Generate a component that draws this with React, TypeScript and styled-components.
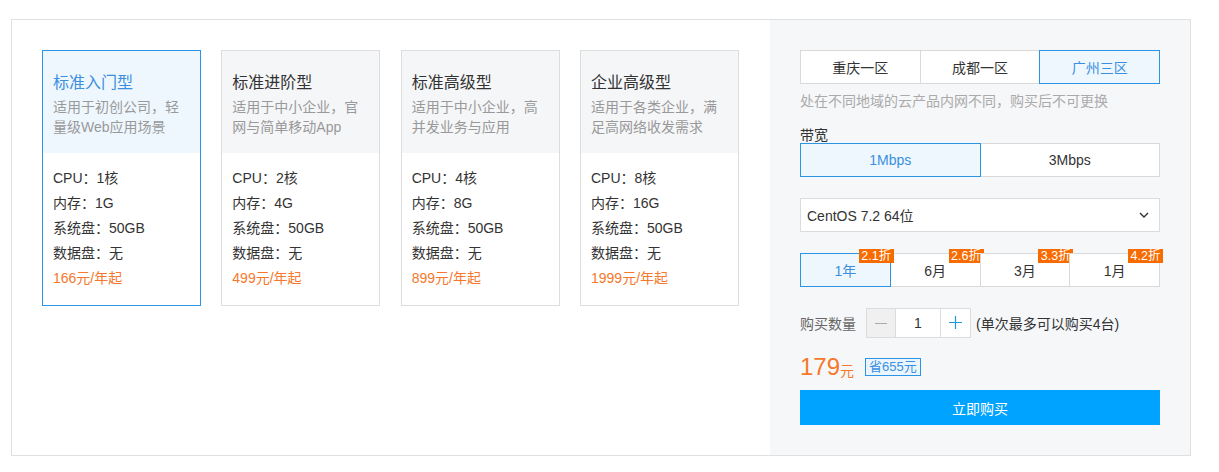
import React from "react";
import styled, { createGlobalStyle } from "styled-components";

const GlobalStyle = createGlobalStyle`
  html, body { margin: 0; padding: 0; background: #fff; }
  body {
    font-family: "Liberation Sans", Arial, "Noto Sans CJK SC", sans-serif;
    font-size: 14px;
    color: #333;
  }
  * { box-sizing: border-box; }
`;

const BLUE = "#2b95e3";
const BLUE_TEXT = "#3a8fe0";
const LIGHT_BLUE = "#eef7fe";
const ORANGE = "#f5782c";

const Page = styled.div`
  padding: 19px 0 0 11px;
`;

const Frame = styled.div`
  width: 1180px;
  border: 1px solid #e0e0e0;
  display: flex;
`;

const Plans = styled.div`
  flex: 1;
  padding: 30px 30px;
`;

const CardGrid = styled.div`
  display: grid;
  grid-template-columns: repeat(4, 159px);
  column-gap: 20.33px;
  align-items: start;
`;

const Card = styled.div<{ $active?: boolean }>`
  border: 1px solid ${(p) => (p.$active ? BLUE : "#dddddd")};
  background: #fff;
`;

const CardHead = styled.div<{ $active?: boolean }>`
  background: ${(p) => (p.$active ? "#eff7fe" : "#f5f6f8")};
  padding: 20px 10px 16px;
`;

const CardTitle = styled.div<{ $active?: boolean }>`
  font-size: 16px;
  line-height: 24px;
  color: ${(p) => (p.$active ? BLUE_TEXT : "#333")};
`;

const CardDesc = styled.div`
  margin-top: 2px;
  font-size: 14px;
  line-height: 20px;
  color: #999;
`;

const CardBody = styled.div`
  padding: 13px 10px 14px;
`;

const Spec = styled.div`
  font-size: 14px;
  line-height: 25px;
  color: #333;
`;

const Price = styled.div`
  font-size: 14px;
  line-height: 25px;
  color: ${ORANGE};
`;

const Side = styled.div`
  width: 420px;
  background: #f6f7f9;
  padding: 30px 30px;
  display: flex;
  flex-direction: column;
`;

const Segmented = styled.div`
  display: flex;
  width: 360px;
  height: 34px;
`;

const SegButton = styled.div<{ $active?: boolean }>`
  position: relative;
  flex: 1;
  display: flex;
  align-items: center;
  justify-content: center;
  border: 1px solid ${(p) => (p.$active ? BLUE : "#d9d9d9")};
  background: ${(p) => (p.$active ? LIGHT_BLUE : "#fff")};
  color: ${(p) => (p.$active ? BLUE_TEXT : "#333")};
  font-size: 14px;
  z-index: ${(p) => (p.$active ? 1 : 0)};
  & + & { margin-left: -1px; }
`;

const Hint = styled.div`
  margin-top: 7px;
  font-size: 14px;
  line-height: 20px;
  color: #aaa;
`;

const Label = styled.div`
  margin-top: 16px;
  font-size: 14px;
  line-height: 16px;
  color: #333;
`;

const Block = styled.div<{ $gap?: number }>`
  margin-top: ${(p) => p.$gap ?? 21}px;
`;

const Select = styled.div`
  width: 360px;
  height: 34px;
  border: 1px solid #dcdcdc;
  background: #fff;
  display: flex;
  align-items: center;
  justify-content: space-between;
  padding: 0 10px 0 6px;
  font-size: 14px;
  color: #333;
`;

const Badge = styled.span`
  position: absolute;
  top: -5px;
  right: -4px;
  width: 35px;
  height: 14px;
  display: flex;
  align-items: center;
  justify-content: center;
  background: #f76b00;
  color: #fff;
  font-size: 12.5px;
  line-height: 1;
  white-space: nowrap;
  z-index: 2;
`;

const QtyRow = styled.div`
  display: flex;
  align-items: center;
  height: 29px;
`;

const QtyLabel = styled.span`
  width: 66px;
  font-size: 14px;
  color: #666;
`;

const Counter = styled.div`
  display: flex;
  height: 30px;
  border: 1px solid #dcdcdc;
  background: #fff;
`;

const CountBtn = styled.div<{ $minus?: boolean }>`
  width: ${(p) => (p.$minus ? 28 : 29)}px;
  display: flex;
  align-items: center;
  justify-content: center;
  background: ${(p) => (p.$minus ? "#f0f0f0" : "#fff")};
`;

const CountValue = styled.div`
  width: 46px;
  border-left: 1px solid #dcdcdc;
  border-right: 1px solid #dcdcdc;
  display: flex;
  align-items: center;
  justify-content: center;
  font-size: 14px;
  color: #333;
`;

const QtyNote = styled.span`
  margin-left: 5px;
  font-size: 14px;
  color: #333;
`;

const PriceRow = styled.div`
  margin-top: 18px;
  height: 24px;
  display: flex;
  align-items: center;
`;

const Total = styled.span`
  font-size: 24px;
  line-height: 24px;
  color: ${ORANGE};
`;

const Unit = styled.span`
  font-size: 14px;
  color: ${ORANGE};
  margin-top: 6px;
`;

const Save = styled.span`
  margin-left: 11px;
  height: 18px;
  padding: 0 3px;
  border: 1px solid ${BLUE};
  background: #eaf5fd;
  color: ${BLUE_TEXT};
  font-size: 13px;
  line-height: 16px;
`;

const BuyButton = styled.button`
  margin-top: 11px;
  width: 360px;
  height: 35px;
  border: none;
  background: #00a3ff;
  color: #fff;
  font-family: inherit;
  font-size: 14px;
  cursor: pointer;
`;

const plans = [
  { title: "标准入门型", desc: "适用于初创公司，轻量级Web应用场景", cpu: "1核", mem: "1G", price: "166", active: true },
  { title: "标准进阶型", desc: "适用于中小企业，官网与简单移动App", cpu: "2核", mem: "4G", price: "499" },
  { title: "标准高级型", desc: "适用于中小企业，高并发业务与应用", cpu: "4核", mem: "8G", price: "899" },
  { title: "企业高级型", desc: "适用于各类企业，满足高网络收发需求", cpu: "8核", mem: "16G", price: "1999" },
];

const durations = [
  { label: "1年", off: "2.1折", active: true },
  { label: "6月", off: "2.6折" },
  { label: "3月", off: "3.3折" },
  { label: "1月", off: "4.2折" },
];

const Chevron = () => (
  <svg width="10" height="6" viewBox="0 0 10 6" fill="none">
    <path d="M1 1l4 4 4-4" stroke="#333" strokeWidth="1.4" />
  </svg>
);

const MinusIcon = () => (
  <svg width="12" height="12" viewBox="0 0 12 12">
    <path d="M0 6.5h12" stroke="#aaa" strokeWidth="1" />
  </svg>
);

const PlusIcon = () => (
  <svg width="13" height="13" viewBox="0 0 13 13">
    <path d="M0 6.5h13M6.5 0v13" stroke="#1a9ad6" strokeWidth="1.2" />
  </svg>
);

export default function App() {
  return (
    <Page>
      <GlobalStyle />
      <Frame>
        <Plans>
          <CardGrid>
            {plans.map((p) => (
              <Card key={p.title} $active={p.active}>
                <CardHead $active={p.active}>
                  <CardTitle $active={p.active}>{p.title}</CardTitle>
                  <CardDesc>{p.desc}</CardDesc>
                </CardHead>
                <CardBody>
                  <Spec>CPU：{p.cpu}</Spec>
                  <Spec>内存：{p.mem}</Spec>
                  <Spec>系统盘：50GB</Spec>
                  <Spec>数据盘：无</Spec>
                  <Price>{p.price}元/年起</Price>
                </CardBody>
              </Card>
            ))}
          </CardGrid>
        </Plans>
        <Side>
          <Segmented>
            <SegButton>重庆一区</SegButton>
            <SegButton>成都一区</SegButton>
            <SegButton $active>广州三区</SegButton>
          </Segmented>
          <Hint>处在不同地域的云产品内网不同，购买后不可更换</Hint>
          <Label>带宽</Label>
          <Segmented>
            <SegButton $active>1Mbps</SegButton>
            <SegButton>3Mbps</SegButton>
          </Segmented>
          <Block>
            <Select>
              <span>CentOS 7.2 64位</span>
              <Chevron />
            </Select>
          </Block>
          <Block>
            <Segmented>
              {durations.map((d) => (
                <SegButton key={d.label} $active={d.active}>
                  {d.label}
                  <Badge>{d.off}</Badge>
                </SegButton>
              ))}
            </Segmented>
          </Block>
          <Block>
            <QtyRow>
              <QtyLabel>购买数量</QtyLabel>
              <Counter>
                <CountBtn $minus>
                  <MinusIcon />
                </CountBtn>
                <CountValue>1</CountValue>
                <CountBtn>
                  <PlusIcon />
                </CountBtn>
              </Counter>
              <QtyNote>(单次最多可以购买4台)</QtyNote>
            </QtyRow>
          </Block>
          <PriceRow>
            <Total>179</Total>
            <Unit>元</Unit>
            <Save>省655元</Save>
          </PriceRow>
          <BuyButton>立即购买</BuyButton>
        </Side>
      </Frame>
    </Page>
  );
}
